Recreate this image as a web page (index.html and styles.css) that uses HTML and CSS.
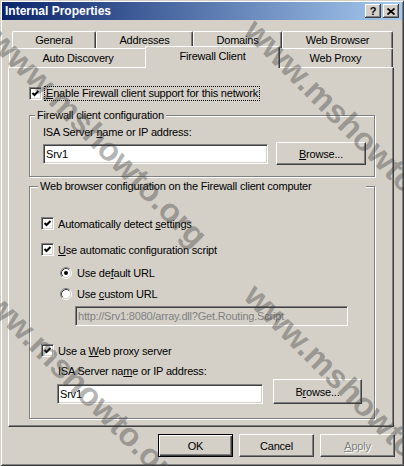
FILE: index.html
```html
<!DOCTYPE html>
<html lang="en">
<head>
    <meta charset="UTF-8">
    <title>Internal Properties</title>
    <link rel="stylesheet" href="styles.css">
</head>
<body>
    <div class="window">
        <div class="titlebar">
            <span class="title">Internal Properties</span>
            <div class="caption-buttons">
                <span class="cap-btn">?</span>
                <span class="cap-btn">
                    <svg width="8" height="7" viewBox="0 0 8 7"><path d="M0.5 0.5 L7.5 6.5 M7.5 0.5 L0.5 6.5" stroke="#000" stroke-width="1.7" fill="none"/></svg>
                </span>
            </div>
        </div>

        <div class="tabs">
            <div class="tab-row row-back">
                <div class="tab tab-general">General</div>
                <div class="tab tab-addresses">Addresses</div>
                <div class="tab tab-domains">Domains</div>
                <div class="tab tab-browser">Web Browser</div>
            </div>
            <div class="tab-row row-front">
                <div class="tab tab-auto">Auto Discovery</div>
                <div class="tab tab-firewall active">Firewall Client</div>
                <div class="tab tab-proxy">Web Proxy</div>
            </div>
        </div>

        <div class="panel">
            <div class="check-row enable">
                <span class="checkbox"><svg width="9" height="9" viewBox="0 0 9 9"><polyline points="1.5,4 3.5,6 7.5,2" stroke="#000" stroke-width="2" fill="none"/></svg></span>
                <span class="focus"><u>E</u>nable Firewall client support for this network</span>
            </div>

            <div class="group group-fw">
                <div class="group-title">Firewall client configuration</div>
                <div class="field-label">ISA Server <u>n</u>ame or IP address:</div>
                <div class="field-row">
                    <div class="textbox tb-fw">Srv1</div>
                    <div class="button browse-fw"><u>B</u>rowse...</div>
                </div>
            </div>

            <div class="group group-web">
                <div class="group-title wide">Web browser configuration on the Firewall client computer</div>
                <div class="check-row cb-detect">
                    <span class="checkbox"><svg width="9" height="9" viewBox="0 0 9 9"><polyline points="1.5,4 3.5,6 7.5,2" stroke="#000" stroke-width="2" fill="none"/></svg></span>
                    <span class="label">Automatically detect <u>s</u>ettings</span>
                </div>
                <div class="check-row cb-script">
                    <span class="checkbox"><svg width="9" height="9" viewBox="0 0 9 9"><polyline points="1.5,4 3.5,6 7.5,2" stroke="#000" stroke-width="2" fill="none"/></svg></span>
                    <span class="label"><u>U</u>se automatic configuration script</span>
                </div>
                <div class="check-row radio-row rb-default">
                    <svg class="radio" width="12" height="12" viewBox="0 0 12 12">
                        <circle cx="6" cy="6" r="4.5" fill="#fff"/>
                        <path d="M2.11 9.89 A5.5 5.5 0 0 1 9.89 2.11" stroke="#808080" fill="none"/>
                        <path d="M9.89 2.11 A5.5 5.5 0 0 1 2.11 9.89" stroke="#fff" fill="none"/>
                        <path d="M2.82 9.18 A4.5 4.5 0 0 1 9.18 2.82" stroke="#404040" fill="none"/>
                        <path d="M9.18 2.82 A4.5 4.5 0 0 1 2.82 9.18" stroke="#d4d0c8" fill="none"/>
                        <circle cx="6" cy="6" r="2" fill="#000"/>
                    </svg>
                    <span class="label">Use de<u>f</u>ault URL</span>
                </div>
                <div class="check-row radio-row rb-custom">
                    <svg class="radio" width="12" height="12" viewBox="0 0 12 12">
                        <circle cx="6" cy="6" r="4.5" fill="#fff"/>
                        <path d="M2.11 9.89 A5.5 5.5 0 0 1 9.89 2.11" stroke="#808080" fill="none"/>
                        <path d="M9.89 2.11 A5.5 5.5 0 0 1 2.11 9.89" stroke="#fff" fill="none"/>
                        <path d="M2.82 9.18 A4.5 4.5 0 0 1 9.18 2.82" stroke="#404040" fill="none"/>
                        <path d="M9.18 2.82 A4.5 4.5 0 0 1 2.82 9.18" stroke="#d4d0c8" fill="none"/>
                    </svg>
                    <span class="label">Use <u>c</u>ustom URL</span>
                </div>
                <div class="textbox disabled tb-url">http://Srv1:8080/array.dll?Get.Routing.Script</div>
                <div class="check-row cb-proxy">
                    <span class="checkbox"><svg width="9" height="9" viewBox="0 0 9 9"><polyline points="1.5,4 3.5,6 7.5,2" stroke="#000" stroke-width="2" fill="none"/></svg></span>
                    <span class="label">Use a <u>W</u>eb proxy server</span>
                </div>
                <div class="field-label proxy-label">ISA Server na<u>m</u>e or IP address:</div>
                <div class="field-row proxy-row">
                    <div class="textbox tb-proxy">Srv1</div>
                    <div class="button browse-proxy">B<u>r</u>owse...</div>
                </div>
            </div>
        </div>

        <div class="dialog-buttons">
            <div class="button default">OK</div>
            <div class="button">Cancel</div>
            <div class="button disabled"><u>A</u>pply</div>
        </div>

        <div class="watermark wm-a">www.mshowto.org</div>
        <div class="watermark wm-b">www.mshowto.org</div>
        <div class="watermark wm-c">www.mshowto.org</div>
        <div class="watermark wm-d">www.mshowto.org</div>
    </div>
</body>
</html>
```
FILE: styles.css
```css
* {
    box-sizing: border-box;
}
body {
    margin: 0;
    font-family: "Liberation Sans", Arial, sans-serif;
    font-size: 11px;
    letter-spacing: -0.2px;
    color: #000;
    background: #d4d0c8;
}
.window {
    position: relative;
    width: 404px;
    height: 466px;
    padding: 2px;
    overflow: hidden;
    background: #d4d0c8;
    box-shadow: inset 1px 1px 0 #d4d0c8, inset -1px -1px 0 #404040, inset 2px 2px 0 #fff, inset -2px -2px 0 #808080;
}

/* title bar */
.titlebar {
    height: 18px;
    display: flex;
    align-items: center;
    justify-content: space-between;
    padding: 0 3px 0 3px;
    background: linear-gradient(to right, #0a246a, #a6caf0);
    color: #fff;
    font-weight: bold;
    font-size: 12px;
    letter-spacing: 0;
}
.caption-buttons {
    display: flex;
    gap: 2px;
}
.cap-btn {
    width: 16px;
    height: 14px;
    display: flex;
    align-items: center;
    justify-content: center;
    background: #d4d0c8;
    color: #000;
    font-size: 11px;
    box-shadow: inset -1px -1px 0 #404040, inset 1px 1px 0 #fff, inset -2px -2px 0 #808080;
}

/* tabs */
.tabs {
    margin: 11px 0 0 6px;
}
.tab-row {
    display: flex;
}
.row-back {
    height: 17px;
    padding-left: 4px;
}
.row-front {
    height: 19px;
    padding-left: 1px;
}
.tab {
    display: flex;
    align-items: center;
    justify-content: center;
    background: #d4d0c8;
    border-top: 1px solid #fff;
    border-left: 1px solid #fff;
    border-right: 1px solid #404040;
    border-radius: 2px 2px 0 0;
    box-shadow: inset -1px 0 0 #808080;
}
.tab-general { width: 84px; }
.tab-addresses { width: 97px; }
.tab-domains { width: 89px; }
.tab-browser { width: 111px; }
.tab-auto { width: 138px; }
.tab-firewall { width: 131px; }
.tab-proxy { width: 115px; }
.tab.active {
    position: relative;
    z-index: 1;
    width: 135px;
    height: 22px;
    margin: -2px -2px 0;
    align-items: flex-start;
    padding-top: 3px;
}

/* page */
.panel {
    width: 386px;
    height: 360px;
    margin-left: 6px;
    padding-left: 20px;
    border: 1px solid;
    border-color: #fff #404040 #404040 #fff;
    box-shadow: inset -1px -1px 0 #808080;
}
.check-row {
    display: flex;
    align-items: center;
    height: 15px;
}
.checkbox {
    width: 13px;
    height: 13px;
    display: flex;
    align-items: center;
    justify-content: center;
    background: #fff;
    border: 1px solid;
    border-color: #808080 #fff #fff #808080;
    box-shadow: inset 1px 1px 0 #404040, inset -1px -1px 0 #d4d0c8;
}
.checkbox svg {
    display: block;
}
.enable {
    margin-top: 18px;
}
.focus {
    margin-left: 2px;
    padding: 0 1px;
    line-height: 13px;
    border: 1px dotted #000;
}
.label {
    margin-left: 4px;
}
.radio-row .label {
    margin-left: 5px;
}

.group {
    width: 346px;
    border: 1px solid #808080;
    box-shadow: inset 1px 1px 0 #fff, 1px 1px 0 #fff;
}
.group-title {
    width: max-content;
    margin-top: -7px;
    line-height: 13px;
    padding: 0 2px;
    background: #d4d0c8;
}
.group-fw {
    margin-top: 14px;
    padding: 0 0 11px 13px;
}
.group-fw .group-title {
    margin-left: -8px;
}
.group-web {
    margin-top: 9px;
    padding: 0 0 14px 11px;
}
.group-title.wide {
    width: 328px;
    margin-left: -3px;
}
.field-label {
    line-height: 13px;
    margin-top: 4px;
}
.field-row {
    display: flex;
    align-items: center;
    margin-top: 3px;
}
.textbox {
    height: 20px;
    display: flex;
    align-items: center;
    padding-left: 2px;
    background: #fff;
    white-space: nowrap;
    overflow: hidden;
    border: 1px solid;
    border-color: #808080 #fff #fff #808080;
    box-shadow: inset 1px 1px 0 #404040, inset -1px -1px 0 #d4d0c8;
}
.textbox.disabled {
    background: #d4d0c8;
    color: #808080;
}
.tb-fw {
    width: 225px;
}
.button {
    display: flex;
    align-items: center;
    justify-content: center;
    width: 75px;
    height: 23px;
    background: #d4d0c8;
    border: 1px solid;
    border-color: #fff #404040 #404040 #fff;
    box-shadow: inset -1px -1px 0 #808080;
}
.browse-fw {
    width: 90px;
    margin-left: 8px;
}

.cb-detect { margin-top: 23px; }
.cb-script { margin-top: 11px; }
.rb-default {
    margin-top: 8px;
    padding-left: 19px;
}
.rb-custom {
    margin-top: 6px;
    padding-left: 19px;
}
.tb-url {
    width: 273px;
    margin: 5px 0 0 34px;
}
.cb-proxy { margin-top: 17px; }
.proxy-label {
    margin: 7px 0 0 17px;
}
.proxy-row {
    align-items: flex-end;
    margin: 1px 0 0 16px;
}
.tb-proxy {
    width: 206px;
}
.browse-proxy {
    width: 89px;
    height: 25px;
    margin-left: 10px;
}

/* OK / Cancel / Apply */
.dialog-buttons {
    display: flex;
    justify-content: flex-end;
    gap: 6px;
    margin-top: 7px;
    padding-right: 7px;
}
.button.default {
    border: 1px solid #000;
    box-shadow: inset 1px 1px 0 #fff, inset -1px -1px 0 #404040, inset -2px -2px 0 #808080;
}
.button.disabled {
    color: #808080;
    text-shadow: 1px 1px 0 #fff;
}

/* watermark */
.watermark {
    position: absolute;
    z-index: 5;
    font-size: 33px;
    font-weight: bold;
    line-height: 34px;
    letter-spacing: 0;
    white-space: nowrap;
    color: rgba(60, 60, 60, 0.4);
    transform: rotate(45deg);
    transform-origin: 0 0;
    pointer-events: none;
}
.wm-a { left: 7px; top: 23px; }
.wm-b { left: 262px; top: 13px; }
.wm-c { left: 262px; top: 278px; }
.wm-d { left: -13px; top: 268px; }
```
